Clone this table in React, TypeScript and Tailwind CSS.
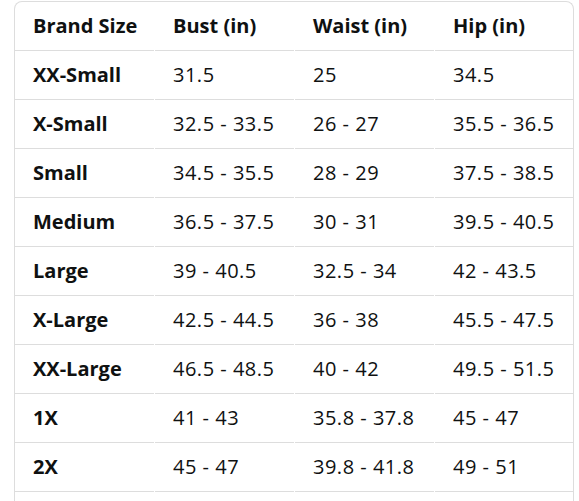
import React from "react";

const rows: [string, string, string, string][] = [
  ["XX-Small", "31.5", "25", "34.5"],
  ["X-Small", "32.5 - 33.5", "26 - 27", "35.5 - 36.5"],
  ["Small", "34.5 - 35.5", "28 - 29", "37.5 - 38.5"],
  ["Medium", "36.5 - 37.5", "30 - 31", "39.5 - 40.5"],
  ["Large", "39 - 40.5", "32.5 - 34", "42 - 43.5"],
  ["X-Large", "42.5 - 44.5", "36 - 38", "45.5 - 47.5"],
  ["XX-Large", "46.5 - 48.5", "40 - 42", "49.5 - 51.5"],
  ["1X", "41 - 43", "35.8 - 37.8", "45 - 47"],
  ["2X", "45 - 47", "39.8 - 41.8", "49 - 51"],
];

function Row({ cells, header }: { cells: string[]; header?: boolean }) {
  return (
    <div className="grid grid-cols-[139px_139px_139px_138px] gap-x-px">
      {cells.map((c, i) => (
        <div
          key={i}
          className={`h-[49px] border-b border-[#dddddd] pl-[18px] flex items-center whitespace-nowrap ${
            header || i === 0 ? "font-bold" : "font-normal tracking-[0.5px]"
          }`}
        >
          {c}
        </div>
      ))}
    </div>
  );
}

export default function App() {
  return (
    <div className="w-[579px] h-[501px] overflow-hidden bg-white">
      <div
        className="ml-[14px] mt-px w-[560px] border-l border-t border-r border-[#dddddd] rounded-t-lg text-[20px] text-[#0f1111] leading-none"
        style={{ fontFamily: '"Open Sans", "Noto Sans", sans-serif' }}
      >
        <Row cells={["Brand Size", "Bust (in)", "Waist (in)", "Hip (in)"]} header />
        {rows.map((r, i) => (
          <Row key={i} cells={r} />
        ))}
        <Row cells={["", "", "", ""]} />
      </div>
    </div>
  );
}
